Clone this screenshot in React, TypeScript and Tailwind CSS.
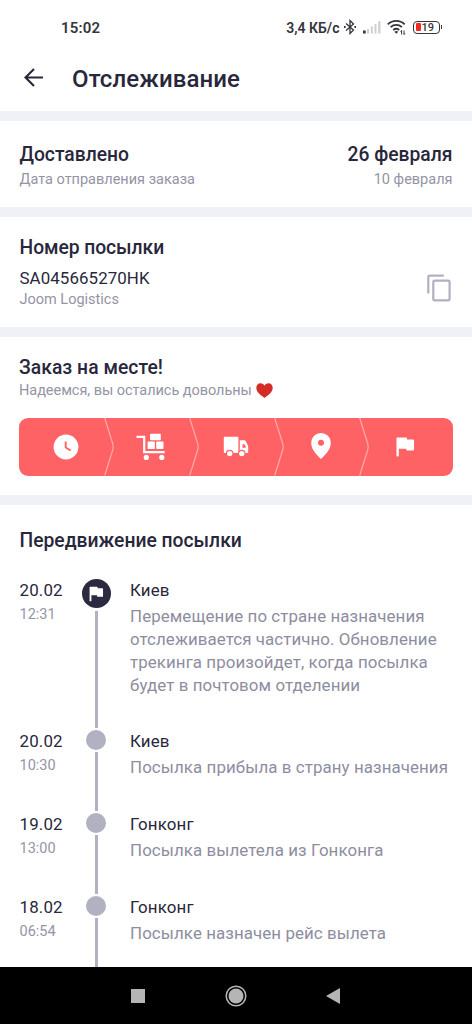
import type { ReactNode } from "react";

type TrackingEvent = {
  date: string;
  time: string;
  city: string;
  lines: string[];
  current?: boolean;
};

const events: TrackingEvent[] = [
  {
    date: "20.02",
    time: "12:31",
    city: "Киев",
    lines: [
      "Перемещение по стране назначения",
      "отслеживается частично. Обновление",
      "трекинга произойдет, когда посылка",
      "будет в почтовом отделении",
    ],
    current: true,
  },
  { date: "20.02", time: "10:30", city: "Киев", lines: ["Посылка прибыла в страну назначения"] },
  { date: "19.02", time: "13:00", city: "Гонконг", lines: ["Посылка вылетела из Гонконга"] },
  { date: "18.02", time: "06:54", city: "Гонконг", lines: ["Посылке назначен рейс вылета"] },
];

function StatusBar() {
  return (
    <div className="flex h-[54px] shrink-0 items-center pl-[61px] pr-[30px] text-[#35353b]">
      <span className="pt-[2px] text-[15px] font-semibold tracking-[0.2px]">15:02</span>
      <span className="ml-auto pt-[2px] text-[14px] font-semibold">3,4 КБ/с</span>
      <svg className="ml-[3px] h-4 w-[14px]" viewBox="0 0 14 16" fill="none" stroke="currentColor" strokeWidth="1.3">
        <path d="M3 4.5 10.5 11 7 14.5v-13L10.5 5 3 11.5" />
        <path d="M1 8h1.6M11.4 8H13" strokeWidth="1.8" />
      </svg>
      <svg className="ml-[6px] h-[14px] w-[18px]" viewBox="0 0 18 14">
        <path d="M0 13.5v-3h2.7v3z" fill="currentColor" />
        <path d="M4 13.5V9h2v4.5zM7.8 13.5v-7h2v7zM11.5 13.5V4h2v9.5zM15.2 13.5V1.2h2.3v12.3z" fill="#cfcfd2" />
      </svg>
      <svg className="ml-[6px] h-4 w-[20px]" viewBox="0 0 20 16" fill="none" stroke="currentColor" strokeWidth="1.8">
        <path d="M.8 5.3C5.6.7 12.9.7 17.7 5.3M3.6 8.2c3.3-3 8-3 11.3 0M6.3 11c1.8-1.5 4.1-1.5 5.9 0" />
        <path d="m7.3 12.8 2 2 2-2a3 3 0 0 0-4 0z" fill="currentColor" stroke="none" />
        <path d="M14.6 15.5v-4M17 11.5v4M13.6 12.6l1-1.2M18 14.4l-1 1.2" strokeWidth="1" />
      </svg>
      <div className="ml-[6px] flex items-center">
        <div className="flex h-[13px] w-[27px] items-center rounded-[4px] border-[1.5px] border-current pl-[2px]">
          <span className="h-[8px] w-[5px] rounded-[1px] bg-[#f32b25]" />
          <span className="ml-px text-[11px] font-medium leading-none">19</span>
        </div>
        <span className="ml-px h-1 w-[1.5px] bg-current" />
      </div>
    </div>
  );
}

function Header() {
  return (
    <div className="flex h-[57px] shrink-0 items-start pl-[24px]">
      <svg className="mt-[14px] h-5 w-5" viewBox="0 0 20 20" fill="none" stroke="currentColor" strokeWidth="2.1">
        <path d="M19 9.5H1.8M10 1 1.5 9.5 10 18" />
      </svg>
      <h1 className="ml-[28px] mt-[9px] text-[24px] font-medium leading-8 tracking-[0.1px]">Отслеживание</h1>
    </div>
  );
}

function Divider() {
  return <div className="h-[10px] shrink-0 bg-[#f0f1f6]" />;
}

function FlagIcon({ className }: { className: string }) {
  return (
    <svg className={className} viewBox="0 0 20 22" fill="currentColor">
      <path d="M.5 1.8Q.5 1 1.3 1h9.500q.8 0 .8.800v1.400h6.600q.8 0 .8.800v10q0 .8-.8.800h-6.600q-.8 0-.8-.8v-1.200H3v7.400q0 .8-.8.800h-.9q-.8 0-.8-.8z" />
    </svg>
  );
}

function ClockIcon() {
  return (
    <svg className="size-[26px]" viewBox="0 0 26 26">
      <circle cx="13" cy="13" r="12.4" fill="white" />
      <path d="M12.7 7.5v6l5 3" fill="none" stroke="#ff6265" strokeWidth="1.9" />
    </svg>
  );
}

function CartIcon() {
  return (
    <svg className="ml-px h-[28px] w-[30px]" viewBox="0 0 30 28" fill="white">
      <path d="M.5 3.8h7.700v15.400h20.500" fill="none" stroke="white" strokeWidth="2.2" />
      <rect x="14" y=".8" width="10.8" height="6.4" rx=".8" />
      <rect x="11.6" y="8.6" width="7.3" height="7.4" rx=".8" />
      <rect x="20.2" y="8.6" width="7.3" height="7.4" rx=".8" />
      <circle cx="10.3" cy="24.4" r="2.6" />
      <circle cx="25.8" cy="24.4" r="2.6" />
    </svg>
  );
}

function TruckIcon() {
  return (
    <svg className="mt-px h-[22px] w-[26px]" viewBox="0 0 26 22" fill="white">
      <path d="M1.8.8h12.6q1 0 1 1v15.2H1.8q-1 0-1-1V1.8q0-1 1-1z" />
      <path d="M16.8 4.3h4.4q1 0 1.5.8l2.2 4.4q.3.6.3 1.2V16q0 1-1 1h-7.400z" />
      <path d="M19.5 8.2h2l1.3 2.6v1h-3.3z" fill="#ff6265" />
      <circle cx="6.7" cy="17.6" r="3.3" stroke="#ff6265" strokeWidth="1.2" />
      <circle cx="18.8" cy="17.6" r="3.3" stroke="#ff6265" strokeWidth="1.2" />
    </svg>
  );
}

function PinIcon() {
  return (
    <svg className="-mt-px h-[26px] w-[20px]" viewBox="0 0 20 26">
      <path d="M10 0A9.8 9.8 0 0 0 .2 9.8C.2 16.6 6 22.3 10 26c4-3.700 9.8-9.400 9.8-16.200A9.8 9.8 0 0 0 10 0z" fill="white" />
      <circle cx="10" cy="9.8" r="3" fill="#ff6265" />
    </svg>
  );
}

function Step({ children, last }: { children: ReactNode; last?: boolean }) {
  return (
    <div className="relative flex h-full w-[85px] items-center justify-center">
      {children}
      {!last && (
        <svg className="absolute -right-[5.5px] top-0 h-full w-[10px]" viewBox="0 0 10 57" preserveAspectRatio="none" fill="none">
          <path d="M.7 0 8.6 25q1.1 3.5 0 7L.7 57" stroke="#ffaaab" strokeWidth="1.2" />
        </svg>
      )}
    </div>
  );
}

function EventRow({ event }: { event: TrackingEvent }) {
  return (
    <div className={event.current ? "flex h-[151px]" : "flex h-[83px]"}>
      <div className="w-[62px]">
        <p className="text-[16.9px] leading-[22px] tracking-[0.15px]">{event.date}</p>
        <p className="mt-[3px] text-[14.5px] leading-[22px] text-[#9494a5]">{event.time}</p>
      </div>
      <div className="flex w-[29px] flex-col items-center">
        {event.current ? (
          <div className="flex size-[29px] shrink-0 items-center justify-center rounded-full bg-[#2b2a40] text-white">
            <FlagIcon className="h-[16px] w-[15px]" />
          </div>
        ) : (
          <div className="size-[19.5px] shrink-0 rounded-full bg-[#b1b1c1]" />
        )}
        <div className="mb-[2px] mt-[2.5px] w-[3px] flex-1 bg-[#b1b1c1]" />
      </div>
      <div className="ml-[19.5px] whitespace-nowrap">
        <p className="text-[16.9px] leading-[22px] tracking-[0.15px]">{event.city}</p>
        <div className="mt-[4px] text-[16.9px] leading-[22.9px] tracking-[0.08px] text-[#8e8d9f]">
          {event.lines.map((line) => (
            <p key={line}>{line}</p>
          ))}
        </div>
      </div>
    </div>
  );
}

function NavBar() {
  return (
    <div className="flex h-[57px] shrink-0 items-center justify-between bg-black pl-[131px] pr-[132px]">
      <div className="size-[14px] bg-[#b5b5b5]" />
      <svg className="ml-px size-[22px]" viewBox="0 0 22 22">
        <circle cx="11" cy="11" r="9.8" fill="none" stroke="#b5b5b5" strokeWidth="1.5" />
        <circle cx="11" cy="11" r="7.5" fill="#b5b5b5" />
      </svg>
      <svg className="h-4 w-[14px]" viewBox="0 0 14 16">
        <path d="M0 8 14 0v16z" fill="#b5b5b5" />
      </svg>
    </div>
  );
}

export default function App() {
  return (
    <div className="flex h-[1024px] w-[472px] flex-col overflow-hidden bg-white font-['Roboto',sans-serif] text-[#28273c]">
      <StatusBar />
      <Header />
      <Divider />

      <section className="flex h-[86px] shrink-0 justify-between px-[19.5px] pt-[22px]">
        <div>
          <h2 className="text-[19.3px] font-medium leading-6">Доставлено</h2>
          <p className="mt-[3px] text-[14.5px] leading-5 text-[#9494a5]">Дата отправления заказа</p>
        </div>
        <div className="text-right">
          <p className="text-[19.3px] font-medium leading-6">26 февраля</p>
          <p className="mt-[3px] text-[14.5px] leading-5 text-[#9494a5]">10 февраля</p>
        </div>
      </section>
      <Divider />

      <section className="flex h-[110px] shrink-0 items-start justify-between pl-[19.5px] pr-[21px] pt-[19px]">
        <div>
          <h2 className="text-[19.3px] font-medium leading-6 tracking-[-0.05px]">Номер посылки</h2>
          <p className="mt-[7px] text-[16.9px] leading-[22px] tracking-[0.08px]">SA045665270HK</p>
          <p className="mt-px text-[14.5px] leading-5 text-[#9494a5]">Joom Logistics</p>
        </div>
        <svg className="mt-[38px] h-[28px] w-[24px]" viewBox="0 0 24 28" fill="none" stroke="#b1b1c1" strokeWidth="2.2">
          <path d="M1.3 19.5V3.2q0-1.5 1.5-1.5h14" />
          <rect x="6.3" y="6.7" width="16.3" height="19.6" rx="1.5" />
        </svg>
      </section>
      <Divider />

      <section className="h-[157.5px] shrink-0 px-[19px] pt-[19px]">
        <h2 className="text-[19.3px] font-medium leading-6 tracking-[0.05px]">Заказ на месте!</h2>
        <div className="mt-px flex items-center">
          <p className="text-[14.5px] leading-5 tracking-[-0.04px] text-[#9494a5]">Надеемся, вы остались довольны</p>
          <svg className="-mt-px ml-[4px] h-[15px] w-[17px]" viewBox="0 0 17 15">
            <path d="M8.5 15C5.5 12.5.3 9.5.3 4.7.3 2 2.2.2 4.5.2c1.9 0 3.4 1 4 2.6.6-1.6 2.1-2.6 4-2.6 2.3 0 4.2 1.8 4.2 4.5 0 4.8-5.2 7.8-8.2 10.3z" fill="#d42b25" />
          </svg>
        </div>
        <div className="mt-[17px] flex h-[57.5px] rounded-[9px] bg-[#ff6265] pl-[4px] text-white">
          <Step><ClockIcon /></Step>
          <Step><CartIcon /></Step>
          <Step><TruckIcon /></Step>
          <Step><PinIcon /></Step>
          <Step last><FlagIcon className="h-[22px] w-[19px]" /></Step>
        </div>
      </section>
      <Divider />

      <section className="min-h-0 flex-1 overflow-hidden pl-[19.5px] pt-[24px]">
        <h2 className="text-[19.3px] font-medium leading-6">Передвижение посылки</h2>
        <div className="mt-[26.5px]">
          {events.map((event) => (
            <EventRow key={event.date + event.time} event={event} />
          ))}
        </div>
      </section>
      <NavBar />
    </div>
  );
}
